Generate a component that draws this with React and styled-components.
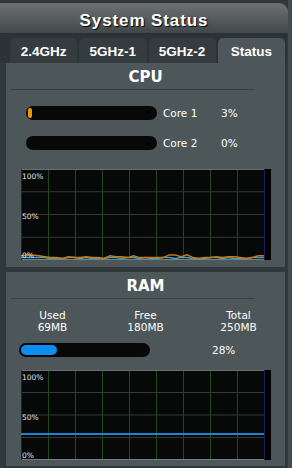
import React from "react";
import styled, { createGlobalStyle } from "styled-components";

const GlobalStyle = createGlobalStyle`
  html, body {
    margin: 0;
    background: #30383b;
    font-family: "DejaVu Sans", Verdana, sans-serif;
  }
`;

const Page = styled.div`
  width: 292px;
  height: 468px;
  display: flex;
  overflow: hidden;
  background: #30383b;
`;

const Main = styled.div`
  width: 288px;
  display: flex;
  flex-direction: column;
  padding-top: 3px;
`;

const RightRail = styled.div`
  flex: 1;
  background: #444c4f;
`;

const Header = styled.div`
  height: 30px;
  border-top-right-radius: 9px;
  background: linear-gradient(#6d7173, #42474a);
  color: #fff;
  font-family: "Liberation Sans", Arial, sans-serif;
  font-weight: bold;
  font-size: 17px;
  letter-spacing: 0.9px;
  line-height: 36px;
  text-align: center;
  text-shadow: 1px 1px 1px #000;
`;

const TabBar = styled.div`
  height: 30px;
  width: 287px;
  background: #2b3336;
  display: flex;
  align-items: flex-end;
  gap: 2px;
  padding: 0 2px 0 10px;
  box-sizing: border-box;
`;

const Tab = styled.div`
  flex: 1;
  height: 25px;
  border-radius: 5px 5px 0 0;
  background: ${(props) => (props.active ? "#4d5659" : "#343c3f")};
  color: #fff;
  font-family: "Liberation Sans", Arial, sans-serif;
  font-weight: bold;
  font-size: 13.5px;
  line-height: 28px;
  text-align: center;
`;

const Content = styled.div`
  display: flex;
  flex-direction: column;
  gap: 5px;
  padding: 0 3px 0 6px;
`;

const Panel = styled.div`
  height: ${(props) => props.h}px;
  background: #4d5659;
  display: flex;
  flex-direction: column;
`;

const Title = styled.div`
  padding-top: 4px;
  line-height: 20px;
  text-align: center;
  color: #fff;
  font-weight: bold;
  font-size: 15px;
`;

const Divider = styled.div`
  margin: 2px 0 0 5px;
  width: 244px;
  height: 1px;
  background: #394043;
`;

const BarRow = styled.div`
  display: flex;
  align-items: center;
  margin-top: ${(props) => props.top}px;
  padding-left: ${(props) => props.left}px;
  color: #fff;
  font-size: 10.5px;
`;

const Bar = styled.div`
  width: 131px;
  height: 14px;
  border-radius: 7px;
  background: #080808;
  padding: 2px;
  box-sizing: border-box;
`;

const Fill = styled.div`
  height: 10px;
  border-radius: 5px;
  background: ${(props) => props.color};
`;

const CoreName = styled.span`
  width: 58px;
  margin-left: 6px;
`;

const Percent = styled.span`
  margin-left: ${(props) => props.gap || 0}px;
`;

const Stats = styled.div`
  margin-top: 10px;
  display: grid;
  grid-template-columns: repeat(3, 1fr);
  color: #fff;
  font-size: 10.5px;
  line-height: 12px;
  text-align: center;
`;

const GraphBox = styled.div`
  margin: ${(props) => props.top}px 0 0 15px;
  width: 250px;
  height: ${(props) => props.h}px;
  line-height: 0;
`;

const Label = styled.text`
  font-family: "DejaVu Sans", Verdana, sans-serif;
  font-size: 7.5px;
  fill: #e4e4e4;
`;

const cpuOrange = [3, 4, 4, 3, 2, 1, 1, 0, 2, 1, 1, 2, 1, 1, 0, 3, 2, 2, 1, 3, 1, 1, 1, 1, 1, 4, 4, 2, 4, 1, 0, 1, 1, 2, 1, 2, 2, 1, 0, 1, 3, 3];
const cpuBlue = [1, 1, 1, 1, 1, 0, 0, 0, 1, 1, 0, 1, 0, 0, 0, 1, 1, 0, 1, 1, 0, 1, 0, 0, 1, 1, 0, 1, 1, 0, 0, 0, 1, 1, 0, 1, 0, 0, 0, 1, 1, 1];
const ramBlue = [28, 28];

function Graph({ h, top, series }) {
  const pw = 243;
  const bottom = h - 1.5;
  const toPoints = (vals) =>
    vals
      .map((v, i) => {
        const x = (i * pw) / (vals.length - 1);
        const y = bottom - (v / 100) * (h - 2);
        return `${x.toFixed(1)},${y.toFixed(1)}`;
      })
      .join(" ");
  return (
    <GraphBox top={top} h={h}>
      <svg width="250" height={h}>
        <rect x="0" y="0" width="250" height={h} fill="#070909" />
        <rect x={pw} y="0" width="7" height={h} fill="#000" />
        {[1, 2, 3].map((k) => (
          <line key={k} x1="0" x2={pw} y1={(h * k) / 4} y2={(h * k) / 4} stroke="#353838" strokeWidth="1" />
        ))}
        {[1, 2, 3, 4, 5, 6, 7, 8].map((k) => (
          <line key={k} x1={27 * k + 0.5} x2={27 * k + 0.5} y1="0" y2={h} stroke="#1b4a1c" strokeWidth="1" />
        ))}
        <line x1="0" x2={pw} y1="0.5" y2="0.5" stroke="#6b6e6e" />
        <line x1="0" x2={pw} y1={h - 0.5} y2={h - 0.5} stroke="#7a7d7d" />
        <line x1="0.5" x2="0.5" y1="0" y2={h} stroke="#1c1c58" />
        <line x1={pw + 0.5} x2={pw + 0.5} y1="0" y2={h} stroke="#1c1c58" />
        {series.map((s) => (
          <polyline key={s.color} points={toPoints(s.values)} fill="none" stroke={s.color} strokeWidth={s.width} />
        ))}
        <Label x="1" y="9.5">100%</Label>
        <Label x="1" y={h / 2 + 4.5}>50%</Label>
        <Label x="1" y={h - 2}>0%</Label>
      </svg>
    </GraphBox>
  );
}

export default function App() {
  return (
    <Page>
      <GlobalStyle />
      <Main>
        <Header>System Status</Header>
        <TabBar>
          <Tab>2.4GHz</Tab>
          <Tab>5GHz-1</Tab>
          <Tab>5GHz-2</Tab>
          <Tab active>Status</Tab>
        </TabBar>
        <Content>
          <Panel h={204}>
            <Title>CPU</Title>
            <Divider />
            <BarRow top={16} left={20}>
              <Bar>
                <Fill color="#f5930c" style={{ width: "4px" }} />
              </Bar>
              <CoreName>Core 1</CoreName>
              <Percent>3%</Percent>
            </BarRow>
            <BarRow top={16} left={20}>
              <Bar />
              <CoreName>Core 2</CoreName>
              <Percent>0%</Percent>
            </BarRow>
            <Graph
              h={91}
              top={19}
              series={[
                { color: "#3aa6cf", values: cpuBlue, width: 1.5 },
                { color: "#c97a12", values: cpuOrange, width: 1.5 },
              ]}
            />
          </Panel>
          <Panel h={194}>
            <Title>RAM</Title>
            <Divider />
            <Stats>
              <div>Used<br />69MB</div>
              <div>Free<br />180MB</div>
              <div>Total<br />250MB</div>
            </Stats>
            <BarRow top={10} left={13}>
              <Bar>
                <Fill color="#0b8ef0" style={{ width: `${Math.round(127 * 0.28)}px` }} />
              </Bar>
              <Percent gap={62}>28%</Percent>
            </BarRow>
            <Graph h={90} top={13} series={[{ color: "#1f82d6", values: ramBlue, width: 2 }]} />
          </Panel>
        </Content>
      </Main>
      <RightRail />
    </Page>
  );
}
